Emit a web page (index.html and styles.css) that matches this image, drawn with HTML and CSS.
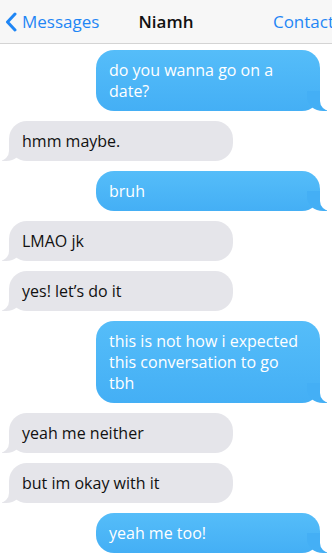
FILE: index.html
```html
<!DOCTYPE html>
<html>
<head>
<meta charset="utf-8">
<link rel="stylesheet" href="styles.css">
</head>
<body>
<div class="phone">
  <header class="nav">
    <div class="nav-left">
      <svg class="chev" width="12" height="20" viewBox="0 0 12 20"><path d="M10 2 L2.5 10 L10 18" fill="none" stroke="#1f86f5" stroke-width="3" stroke-linecap="round" stroke-linejoin="round"/></svg>
      <span class="nav-link">Messages</span>
    </div>
    <div class="nav-title">Niamh</div>
    <div class="nav-right"><span class="nav-link">Contact</span></div>
  </header>
  <main class="chat">
    <div class="bubble sent">do you wanna go on a date?</div>
    <div class="bubble recv">hmm maybe.</div>
    <div class="bubble sent">bruh</div>
    <div class="bubble recv">LMAO jk</div>
    <div class="bubble recv">yes! let’s do it</div>
    <div class="bubble sent">this is not how i expected this conversation to go tbh</div>
    <div class="bubble recv">yeah me neither</div>
    <div class="bubble recv">but im okay with it</div>
    <div class="bubble sent">yeah me too!</div>
  </main>
</div>
</body>
</html>
```
FILE: styles.css
```css
* { box-sizing: border-box; }
html, body { margin: 0; padding: 0; background: #fff; }
body { font-family: "Open Sans", "Noto Sans", sans-serif; overflow: hidden; }
.phone { width: 332px; height: 557px; overflow: hidden; }
.nav {
  height: 44px;
  background: #f7f7f7;
  border-bottom: 1px solid #d4d4d4;
  display: grid;
  grid-template-columns: 1fr auto 1fr;
  align-items: center;
  font-size: 17px;
}
.nav-left { display: flex; align-items: center; padding-left: 5px; gap: 5px; }
.chev { display: block; }
.nav-link { color: #1f86f5; }
.nav-title { font-weight: 600; color: #111; padding-left: 0; }
.nav-right { display: flex; justify-content: flex-end; margin-right: -2px; white-space: nowrap; }
.chat {
  display: flex;
  flex-direction: column;
  gap: 10px;
  padding-top: 6px;
}
.bubble {
  position: relative;
  width: 224px;
  font-size: 16px;
  line-height: 21px;
  padding: 9.5px 13px 9.5px 13px;
  border-radius: 18px;
}
.sent {
  align-self: flex-end;
  margin-right: 12px;
  color: #fff;
  background: linear-gradient(#55bdf9, #44aff5);
}
.recv {
  align-self: flex-start;
  margin-left: 9px;
  color: #111;
  background: #e5e5ea;
}
.sent::before, .sent::after, .recv::before, .recv::after {
  content: "";
  position: absolute;
  bottom: 0;
  height: 20px;
}
.sent::before {
  right: -7px;
  width: 20px;
  background: #44aff5;
  border-bottom-left-radius: 16px 14px;
}
.sent::after {
  right: -26px;
  width: 26px;
  background: #fff;
  border-bottom-left-radius: 10px;
}
.recv::before {
  left: -7px;
  width: 20px;
  background: #e5e5ea;
  border-bottom-right-radius: 16px 14px;
}
.recv::after {
  left: -26px;
  width: 26px;
  background: #fff;
  border-bottom-right-radius: 10px;
}
```
